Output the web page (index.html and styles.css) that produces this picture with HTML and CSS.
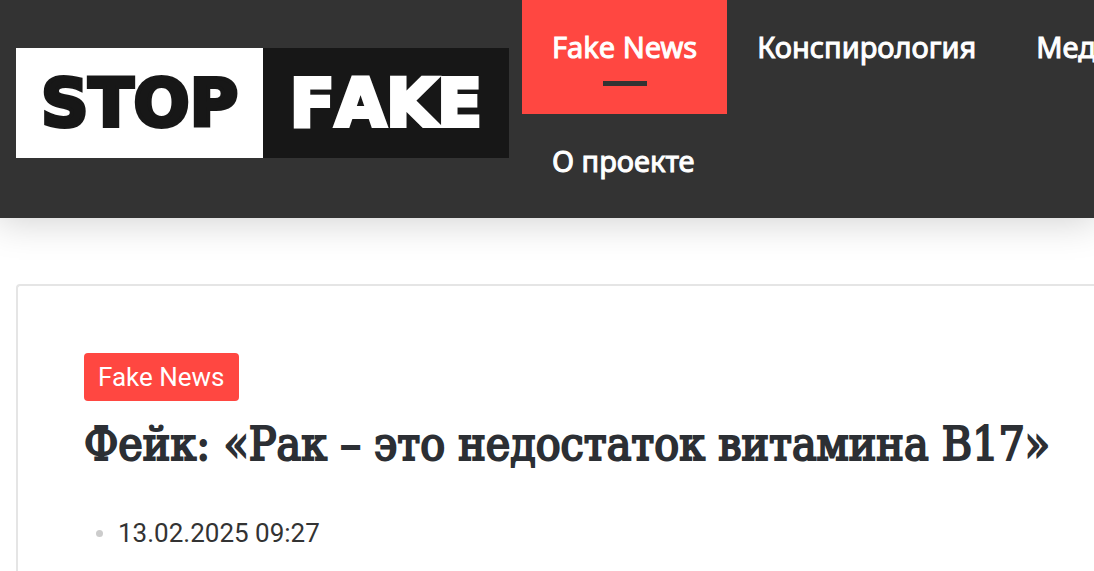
FILE: index.html
```
<!DOCTYPE html>
<html lang="ru">
<head>
<meta charset="utf-8">
<meta name="viewport" content="width=device-width, initial-scale=1">
<title>Stop Fake</title>
<link rel="stylesheet" href="styles.css">
</head>
<body>
<header class="header">
  <a class="logo" href="#">
    <span class="logo-part logo-stop">STOP</span>
    <span class="logo-part logo-fake">FAKE</span>
  </a>
  <nav class="nav">
    <a class="nav-link is-active" href="#">Fake News</a>
    <a class="nav-link" href="#">Конспирология</a>
    <a class="nav-link" href="#">Мед</a>
    <a class="nav-link" href="#">О проекте</a>
  </nav>
</header>
<main class="page">
  <article class="card">
    <a class="tag" href="#">Fake News</a>
    <h1 class="title">Фейк: «Рак – это недостаток витамина B17»</h1>
    <div class="meta"><time datetime="2025-02-13T09:27">13.02.2025 09:27</time></div>
  </article>
</main>
</body>
</html>
```

FILE: styles.css
```
* { box-sizing: border-box; }

body {
  margin: 0;
  min-height: 100vh;
  display: flex;
  flex-direction: column;
  background: #fff;
  color: #333;
  font-family: Roboto, sans-serif;
  overflow-x: hidden;
}

a { text-decoration: none; }

.header {
  display: flex;
  gap: 13px;
  padding-left: 16px;
  background: #333;
  box-shadow: 0 0 36px 4px rgba(0, 0, 0, 0.18);
}

.logo {
  flex: none;
  display: grid;
  grid-template-columns: 247px 246px;
  margin: 48px 0 60px;
  font-family: "DejaVu Sans", sans-serif;
  font-weight: 700;
  font-size: 66px;
  font-kerning: none;
  line-height: 108px;
  text-align: center;
}

.logo-part {
  padding-top: 2px;
  -webkit-text-stroke: 4px currentColor;
}
.logo-stop { background: #fff; color: #171717; }
.logo-fake { background: #171717; color: #fff; }

.nav {
  flex: 1;
  min-width: 0;
  display: grid;
  grid-template-columns: repeat(3, max-content);
  grid-template-rows: 114px 104px;
  overflow: hidden;
}

.nav-link {
  padding: 26px 30px 0;
  color: #fff;
  font-family: "Noto Sans", sans-serif;
  font-size: 29px;
  font-weight: 400;
  line-height: 42px;
  white-space: nowrap;
  -webkit-text-stroke: 1px currentColor;
}

.is-active { background: #ff4741; }

.is-active::after {
  content: "";
  display: block;
  width: 44px;
  height: 5px;
  margin: 13px auto 0;
  background: #333;
}

.page {
  flex: 1;
  display: flex;
  padding: 66px 0 0 16px;
}

.card {
  flex: 1;
  padding: 67px 0 20px 66px;
  border: 2px solid #e5e5e5;
  border-width: 2px 0 0 2px;
  border-top-left-radius: 4px;
}

.tag {
  display: inline-block;
  padding: 0 14px;
  border-radius: 4px;
  background: #ff4741;
  color: #fff;
  font-size: 26px;
  line-height: 48px;
}

.title {
  margin: 14px 0 0;
  color: #2c2f34;
  font-family: "DejaVu Serif Condensed", "DejaVu Serif", serif;
  font-size: 46px;
  font-weight: 400;
  line-height: 58px;
  -webkit-text-stroke: 2px currentColor;
}

.meta {
  display: flex;
  align-items: center;
  gap: 15px;
  margin-top: 40px;
  padding-left: 12px;
  font-size: 26px;
  line-height: 40px;
}

.meta::before {
  content: "";
  width: 7px;
  height: 7px;
  border-radius: 50%;
  background: #ccc;
}
```
